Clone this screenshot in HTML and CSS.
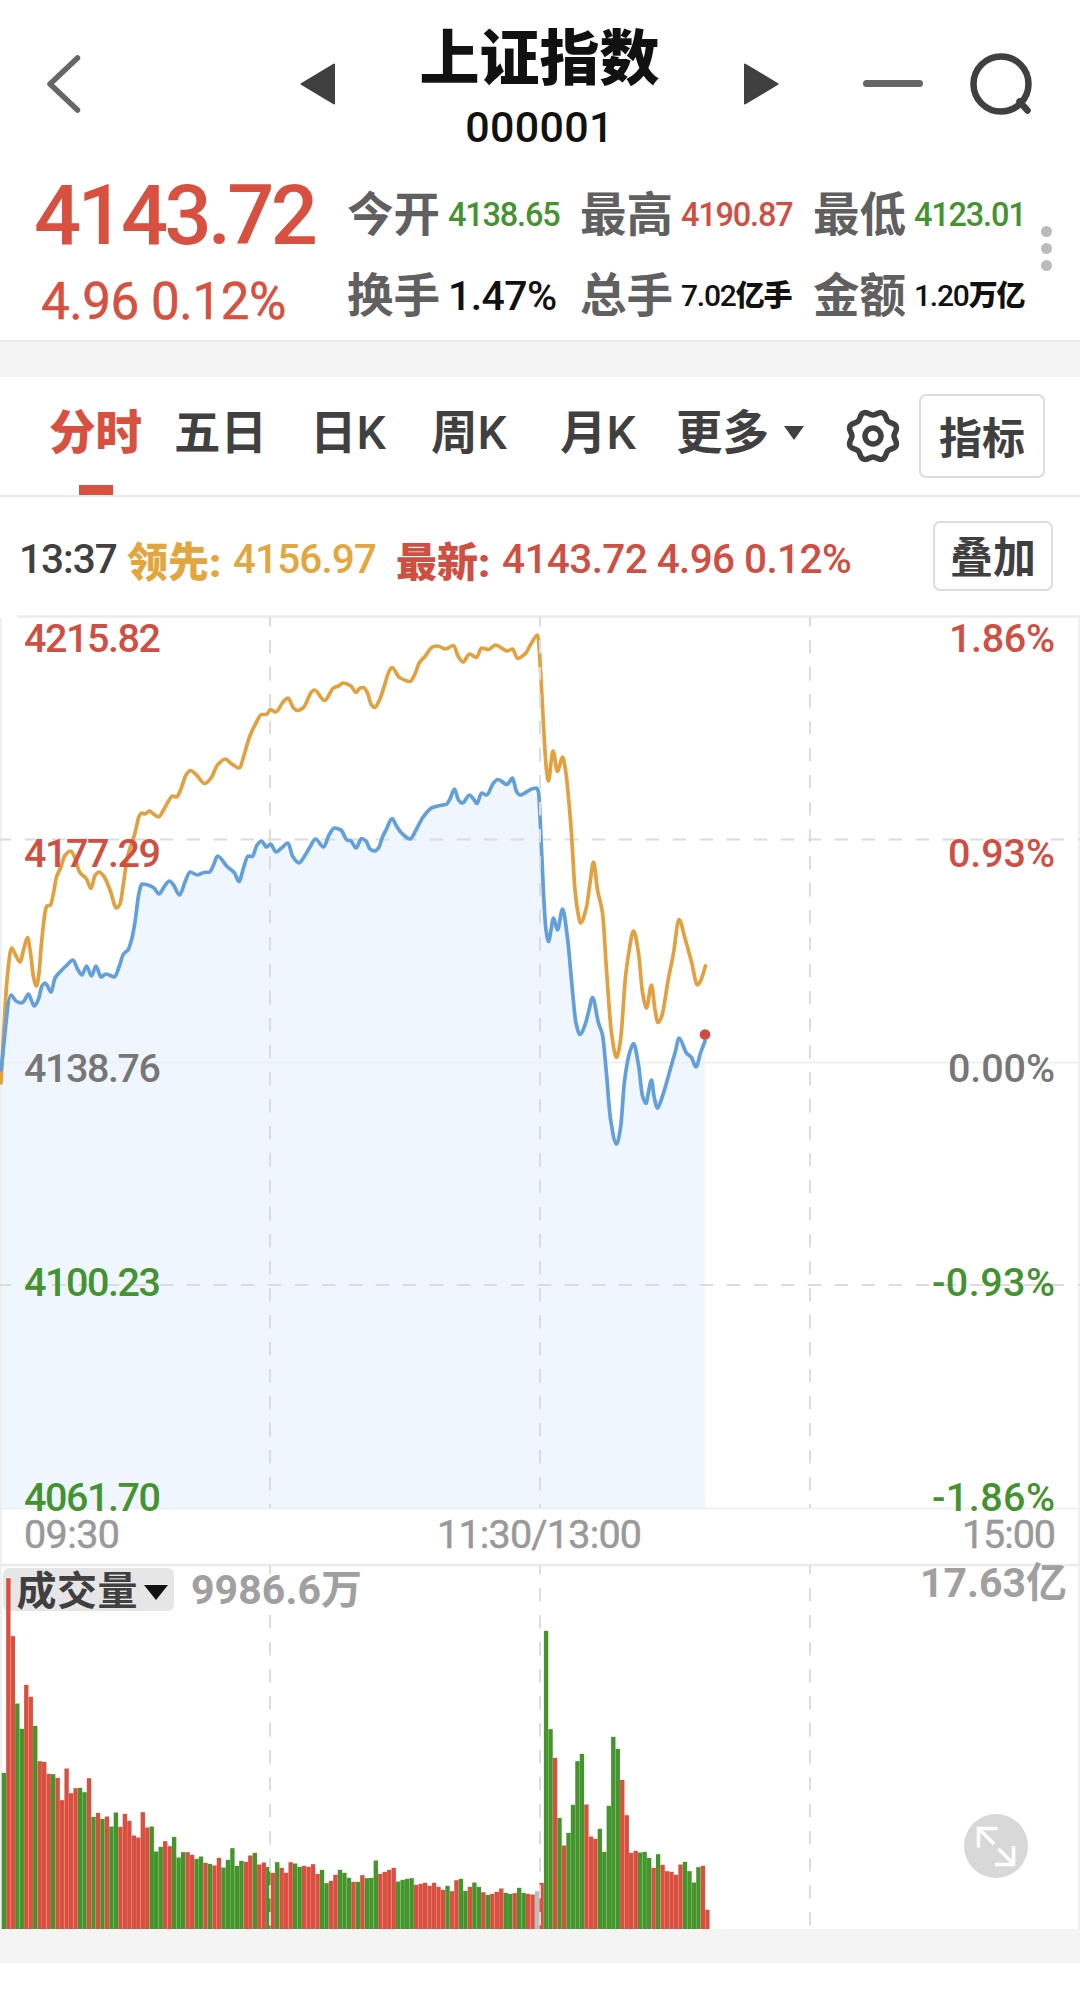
FILE: index.html
```html
<!DOCTYPE html>
<html lang="zh-CN">
<head>
<meta charset="utf-8">
<title>上证指数</title>
<link rel="stylesheet" href="styles.css">
</head>
<body>
<header class="nav">
  <svg class="nav-back" width="40" height="64" viewBox="0 0 40 64"><path d="M32.500 6 5 32l27.500 26"/></svg>
  <svg class="nav-prev" width="36" height="42" viewBox="0 0 36 42"><path d="M1.500 21 34 1.500v39z"/></svg>
  <div class="nav-title">
    <h1>上证指数</h1>
    <span>000001</span>
  </div>
  <svg class="nav-next" width="36" height="42" viewBox="0 0 36 42"><path d="M34.500 21 2 1.500v39z"/></svg>
  <svg class="nav-minus" width="60" height="8" viewBox="0 0 60 8"><rect width="60" height="7" rx="3.500"/></svg>
  <svg class="nav-search" width="66" height="66" viewBox="0 0 66 66"><circle cx="32" cy="33" r="27.500"/><path d="m50.500 50.500 8 9"/></svg>
</header>

<section class="quote">
  <div class="price">
    <div class="price-last">4143.72</div>
    <div class="price-change">4.96 0.12%</div>
  </div>
  <dl class="stats">
    <div><dt>今开</dt><dd class="down small">4138.65</dd></div>
    <div><dt>最高</dt><dd class="up small">4190.87</dd></div>
    <div><dt>最低</dt><dd class="down small">4123.01</dd></div>
    <div><dt>换手</dt><dd class="large">1.47%</dd></div>
    <div><dt>总手</dt><dd class="mixed">7.02<b>亿手</b></dd></div>
    <div><dt>金额</dt><dd class="mixed">1.20<b>万亿</b></dd></div>
  </dl>
  <div class="more-dots"><i></i><i></i><i></i></div>
</section>

<nav class="tabs">
  <a class="tab tab-active">分时</a>
  <a class="tab">五日</a>
  <a class="tab">日<span>K</span></a>
  <a class="tab">周<span>K</span></a>
  <a class="tab">月<span>K</span></a>
  <a class="tab">更多<svg width="22" height="16" viewBox="0 0 22 16"><path d="M1 1h20L11 15z"/></svg></a>
  <svg class="gear" width="58" height="58" viewBox="-29 -29 58 58"><path id="gear-outline"/><circle r="8"/></svg>
  <button class="btn btn-indicator">指标</button>
</nav>

<div class="legend">
  <span class="legend-time">13:37</span>
  <b class="lead">领先:</b>
  <span class="lead legend-lead">4156.97</span>
  <b class="latest">最新:</b>
  <span class="latest legend-latest">4143.72 4.96 0.12%</span>
  <button class="btn btn-overlay">叠加</button>
</div>

<svg class="chart" width="1080" height="1314" viewBox="0 615 1080 1314">
  <path class="area" id="area"/>
  <path class="rule" d="M1 618V1929M1079 618V1929M0 1062.500H1080M0 1508.500H1080"/>
  <path class="rule strong" d="M17 616.500H1080M0 1565H1080"/>
  <path class="dash" stroke-dashoffset="2.300" d="M0 839.500H1080M0 1285H1080"/>
  <path class="line line-lead" id="lead"/>
  <path class="line line-price" id="price"/>
  <circle class="dot" cx="705" cy="1034.500" r="5.300"/>
  <rect class="chip" x="3" y="1568" width="171" height="43" rx="6"/>
  <g id="bars"></g>
  <path class="dash" stroke-dashoffset="4" d="M270 617V1508M540 617V1508M810 617V1508M270 1565V1929M540 1565V1929M810 1565V1929"/>

  <g class="num">
    <text class="up" x="24" y="652" textLength="137">4215.82</text>
    <text class="up" x="24" y="867" textLength="137">4177.29</text>
    <text class="flat" x="24" y="1082" textLength="137">4138.76</text>
    <text class="down" x="24" y="1296" textLength="137">4100.23</text>
    <text class="down" x="24" y="1511" textLength="137">4061.70</text>
    <text class="up" x="949" y="652" textLength="106">1.86%</text>
    <text class="up" x="948" y="867" textLength="107">0.93%</text>
    <text class="flat" x="948" y="1082" textLength="107">0.00%</text>
    <text class="down" x="932" y="1296" textLength="123">-0.93%</text>
    <text class="down" x="932" y="1511" textLength="123">-1.86%</text>
    <text class="time" x="24" y="1548" textLength="96">09:30</text>
    <text class="time" x="437" y="1548" textLength="205">11:30/13:00</text>
    <text class="time" x="962" y="1548" textLength="94">15:00</text>
    <text class="vol" x="191" y="1604" textLength="171">9986.6万</text>
    <text class="vol" x="920" y="1597" textLength="147">17.63亿</text>
  </g>
  <text class="chip-label" x="16.500" y="1605" textLength="121">成交量</text>
  <path class="chip-arrow" d="M144 1585h24l-12 15z"/>
  <g class="expand" transform="translate(996 1846)">
    <circle r="32"/>
    <path d="M-2-2-17-17M-17.500 1.500v-19H1.500M2.500 3 17.500 18M17.500 0v18.500H-1"/>
  </g>
</svg>
<footer class="gap"></footer>
<script src="chart.js"></script>
</body>
</html>
```
FILE: styles.css
```css
* { box-sizing: border-box; }
body {
  margin: 0;
  width: 1080px;
  height: 1993px;
  overflow: hidden;
  background: #fff;
  color: #404040;
  font-family: Roboto, "Noto Sans CJK SC", sans-serif;
  font-weight: 500;
}

.nav {
  height: 170px;
  display: grid;
  grid-template-columns: 255px 36px 407px 36px 84px 60px 46px 66px;
  padding-left: 45px;
  align-items: center;
}
.nav svg { margin-top: -2px; }
.nav-back path { fill: none; stroke: #666; stroke-width: 5.5; stroke-linecap: round; stroke-linejoin: round; }
.nav-prev path, .nav-next path { fill: #404040; stroke: #404040; stroke-width: 2; stroke-linejoin: round; }
.nav-minus { grid-column: 6; fill: #666; }
.nav-search { grid-column: 8; fill: none; stroke: #404040; stroke-width: 6.5; stroke-linecap: round; }
.nav-title { text-align: center; color: #111; align-self: start; padding-top: 22px; }
.nav-title h1 { margin: 0; font: 900 60px/64px "Noto Sans CJK SC", sans-serif; }
.nav-title span { display: block; font-size: 43px; line-height: 50px; margin-top: 16px; letter-spacing: 0.3px; }

.quote { height: 172px; display: flex; padding-left: 34px; border-bottom: 2px solid #ebebeb; }
.up { color: #cf4f43; fill: #cf4f43; }
.down { color: #449230; fill: #449230; }
.flat { fill: #777; }
.price { width: 313px; color: #d8503f; white-space: nowrap; }
.price-last { font-size: 83px; line-height: 90px; letter-spacing: -3.7px; padding-top: 1px; }
.price-change { font-size: 51px; line-height: 56px; margin-top: 13px; padding-left: 7px; letter-spacing: -0.4px; font-weight: 400; -webkit-text-stroke: 0.5px #d8503f; }
.stats {
  margin: 18px 0 0;
  width: 697px;
  display: grid;
  grid-template-columns: 233px 233px 231px;
  grid-auto-rows: 81px;
}
.stats div { display: flex; align-items: center; height: 54px; white-space: nowrap; }
.stats dt { width: 101px; font-size: 46.5px; font-weight: 700; line-height: 54px; color: #606060; }
.stats dd { margin: 0; line-height: 54px; }
.small { font-size: 32.5px; letter-spacing: -1.2px; }
.large { font-size: 41px; letter-spacing: -0.6px; color: #111; }
.mixed { font-size: 30px; letter-spacing: -1.2px; color: #111; }
.mixed b { font-size: 29px; font-weight: 900; }
.more-dots { display: flex; flex-direction: column; gap: 6px; padding-top: 56px; margin-left: -3px; }
.more-dots i { width: 11px; height: 11px; border-radius: 50%; background: #bbb; }

.tabs {
  height: 155px;
  border-top: 35px solid #f4f4f4;
  border-bottom: 2px solid #e9e9e9;
  display: grid;
  grid-template-columns: 125px 136px 121px 129px 116px 168px 75px 126px;
  padding-left: 49px;
}
.tab { position: relative; height: 118px; line-height: 112px; font-size: 46.5px; font-weight: 700; white-space: nowrap; }
.tab span { font-weight: 500; }
.tab svg { margin-left: 14px; vertical-align: 8px; fill: #404040; }
.tab-active { color: #d8503f; font-weight: 900; }
.tab-active::after { content: ""; position: absolute; left: 30px; bottom: 0; width: 34px; height: 10px; background: #d8503f; }
.gear { margin-top: 30px; fill: none; stroke: #404040; stroke-width: 5.5; stroke-linejoin: round; }
.btn {
  padding: 0 0 3px;
  border: 2px solid #dcdcdc;
  border-radius: 7px;
  background: #fff;
  color: #404040;
  font: 700 43px/60px "Noto Sans CJK SC", sans-serif;
}
.btn-indicator { height: 84px; margin-top: 17px; }

.legend { height: 118px; display: flex; align-items: center; font-size: 40.5px; white-space: nowrap; padding: 5px 0 0 19px; }
.legend b { font-weight: 900; font-size: 41px; }
.legend-time { width: 108px; letter-spacing: -1px; }
.lead { color: #e3a63e; }
.latest { color: #cf4f43; }
.legend b.lead, .legend b.latest { width: 106px; }
.legend-lead { width: 163px; letter-spacing: -0.9px; }
.legend-latest { width: 431px; letter-spacing: -0.6px; }
.btn-overlay { width: 120px; height: 70px; margin-top: -6px; }

.chart { display: block; }
.area { fill: #eff6fd; }
.rule { fill: none; stroke: #eff0f2; stroke-width: 2; }
.strong { stroke: #ebebeb; stroke-width: 2.5; }
.dash { fill: none; stroke: #dcdcdc; stroke-width: 2; stroke-dasharray: 13.5 13.5; }
.line { fill: none; stroke-width: 3.7; stroke-linejoin: round; stroke-linecap: round; }
.line-lead { stroke: #e2a03f; }
.line-price { stroke: #629fdb; }
.dot { fill: #d04a40; }
.num { font-size: 39.5px; }
.time { fill: #999; font-weight: 400; stroke: #999; stroke-width: 0.5; }
.vol { fill: #a0a0a0; font-size: 41px; font-weight: 700; }
.chip { fill: #e6e6e6; }
.chip-label { fill: #404040; font-size: 40px; font-weight: 700; }
.chip-arrow { fill: #111; }
.bar-up { fill: #d95040; }
.bar-down { fill: #43952c; }
.bar-even { fill: #bdbdbd; }
.expand circle { fill: #d8d8d8; }
.expand path { fill: none; stroke: #fff; stroke-width: 3.6; }
.gap { height: 34px; background: #f4f4f4; }
```
FILE: chart.js
```js
const price = [1,1070,11,995,16,1001,21,1003,24,1001,28.5,994,32,1002,34.5,1006,38.5,999,42,986,45,983,47.5,986,51,992,55,978,60,972,67,965,73,960,77.5,969,82,975,86.5,966,91.5,976,96,966,101,977,106,974,114.5,977,119,967,123.5,954,128,950,132,938,135,922,139,893,142,884,148,885,154,888,159,894,164,887,169.5,881,173.5,885,179.5,895,185,882,190,872,197.5,875,204,872.5,209.5,872,213.5,865,217.5,856,227,866.5,234.5,873,239,881.5,243.5,868,248,856,252.5,856.5,256.5,846,261.5,841,266.5,847,270.5,844,276,852,281.5,848,288,843,292.5,856,299,863,304,857,310,847,315.5,839,323.5,847,329,835,334.5,828,341,830,347,840,351,841,356,848,361.5,838.5,366,841,370,849,374.5,851,378.5,848,382.5,837,386.5,829,392,818.5,396.5,826,401.5,833,410,839,416,830,422.5,818,431.5,808,440,805.5,446,804.5,450,799,454.5,789,458.5,800,462.5,803,469.5,795,473.5,799,477,803.5,481.5,793,486.5,795,493.5,783,498,779.5,507,784.5,512.5,778,516.5,791.5,520,795,526.5,792,531.5,789,536.5,788,538.5,792,540.5,827,543.5,893,546,930,548.5,941.5,551,930,553.5,918,557.5,930,562.5,909,567.5,938,571.5,980,576,1023,580,1034.5,585,1025,589,1010,592.5,997.5,598.5,1023,602.5,1035,606.5,1074,610.5,1119,616.5,1144,620.5,1128,624.5,1081,629.5,1053,633.5,1043.5,638.5,1065,642.5,1096,646,1103.5,648.5,1092,651.5,1080,654,1096,657.5,1108,661.5,1099,671.5,1065,675.5,1051,679,1038,686.5,1053,691.5,1057.5,696,1067,700.5,1053,705,1041];
const lead = [1,1083,4,1027,7,980,11.5,948,16,956,20,962,24,948,27.5,937.5,30.5,953,33.5,977,36.5,986,39,973,41.5,943,45.5,910,47,906,50.5,905,53.5,893,56.5,877,60.5,868,65,855.5,70.5,851,75,858,79.5,872,86.5,879,91,888.5,95,875.5,99,872,104,876.5,110,890,116.5,908,120,904,123.5,883,127.5,857,135,833,139,816.5,141.5,813,145,814,149.5,811,153.5,814,158.5,817,163.5,810,168.5,801,172.5,796,176.5,797,180.5,790,186,775,190.5,770.5,196.5,775,204.5,783.5,211,778,217.5,765,225.5,759,230.5,763,239.5,768,243.5,757,249.5,737,256,723,261.5,714.5,266.5,714.5,270.5,709.5,275.5,712,283.5,701.5,288,698,293.5,708,297.5,710.5,303.5,707.5,311.5,692,314.5,690,324.5,700.5,333.5,688,338.5,686,343,683,351,686,356,692.5,360,688,363.5,687.5,367.5,693,371,704,374.5,707.5,379.5,700,384,687,389,671.5,392,667.5,399.5,677.5,410,681.5,414.5,675,419.5,662.5,425,656.5,432.5,647,437.5,646,445.5,649,453.5,645.5,458.5,657,463,662,469.5,654,476.5,657.5,481.5,648,488.5,649.5,495.5,645,507.5,651,512.5,649,517.5,658.5,525,654,531.5,643,537.5,635,538.5,640,540.5,670,544.5,743,546.5,770,548.5,781,551,763,553,751,557.5,771.5,562.5,757,565.5,770,571,827,575,890,578,913,580.5,923,586.5,907,590,883,593.5,862,597.5,890,602.5,913,606.5,970,611.5,1033,616.5,1057.5,620.5,1040,625.5,977,628.5,954.5,633.5,931,638.5,953,642.5,992,646.5,1008,651.5,985,655,1010,658,1022.5,661.5,1017,668.5,978,673.5,953,679,919.5,685,938.5,691.5,962,697.5,985,700.5,981,705.5,966];

// Bar heights in thirds of a pixel; R = up, G = down, N = unchanged
const volumes = "G470 R1054 R880 G678 G602 R734 R698 G611 R505 R503 R467 G466 R455 R388 R483 R409 R424 G425 G412 R454 G338 R350 G332 R339 G309 G351 R308 R347 R326 R282 R276 R352 R306 G309 G234 G248 R265 R250 G278 G216 G232 R232 R224 G212 G219 R200 G197 R192 R215 G186 G209 G244 G191 G206 R203 R222 G230 R195 R201 G188 R170 G202 R185 R170 R202 G198 G188 R191 R188 R196 R167 G179 G139 R146 R164 G179 G170 G155 R143 G143 R163 G154 G155 G207 R167 R173 R179 R185 G144 G149 G152 G154 R134 R137 R140 R131 R140 R128 R119 G131 R115 R148 G152 G116 R128 G141 G128 R112 G104 R107 R113 R123 G110 G107 R109 G125 G110 R107 R105 N115 R140 G896 G601 R515 G335 R252 G290 G374 G505 G527 R375 R279 R272 G302 G233 G371 G578 G542 R449 R343 R230 R236 G231 G233 G215 R185 G226 R194 R175 R173 R164 R195 G203 G175 G141 G187 R191 R59".split(" ");

function smooth(flat) {
  const p = [];
  for (let i = 0; i < flat.length; i += 2) p.push([flat[i], flat[i + 1]]);
  const n = p.length;
  const slope = i => (p[i + 1][1] - p[i][1]) / (p[i + 1][0] - p[i][0]);
  const tangent = i => {
    if (i === 0) return slope(0);
    if (i === n - 1) return slope(n - 2);
    const a = slope(i - 1), b = slope(i);
    return a * b <= 0 ? 0 : (2 * a * b) / (a + b);
  };
  let d = `M${p[0]}`;
  for (let i = 0; i < n - 1; i++) {
    const h = (p[i + 1][0] - p[i][0]) / 3;
    d += `C${p[i][0] + h},${p[i][1] + h * tangent(i)} ${p[i + 1][0] - h},${p[i + 1][1] - h * tangent(i + 1)} ${p[i + 1]}`;
  }
  return d;
}

const pricePath = smooth(price);
document.getElementById("price").setAttribute("d", pricePath);
document.getElementById("area").setAttribute("d", pricePath + "V1508H1Z");
document.getElementById("lead").setAttribute("d", smooth(lead));

const kinds = { R: "bar-up", G: "bar-down", N: "bar-even" };
document.getElementById("bars").innerHTML = volumes.map((v, i) => {
  const h = v.slice(1) / 3;
  return `<rect class="${kinds[v[0]]}" x="${(1.7 + i * 4.481).toFixed(2)}" y="${(1929.5 - h).toFixed(2)}" width="4.35" height="${h.toFixed(2)}"/>`;
}).join("");

// Eight-lobed cog outline
let cog = "";
for (let a = 0; a < 360; a += 3) {
  const t = a * Math.PI / 180;
  const r = 23 + 2 * Math.cos(8 * (t - Math.PI / 8));
  cog += `${a ? "L" : "M"}${(r * Math.cos(t)).toFixed(2)} ${(r * Math.sin(t)).toFixed(2)}`;
}
document.getElementById("gear-outline").setAttribute("d", cog + "Z");
```
